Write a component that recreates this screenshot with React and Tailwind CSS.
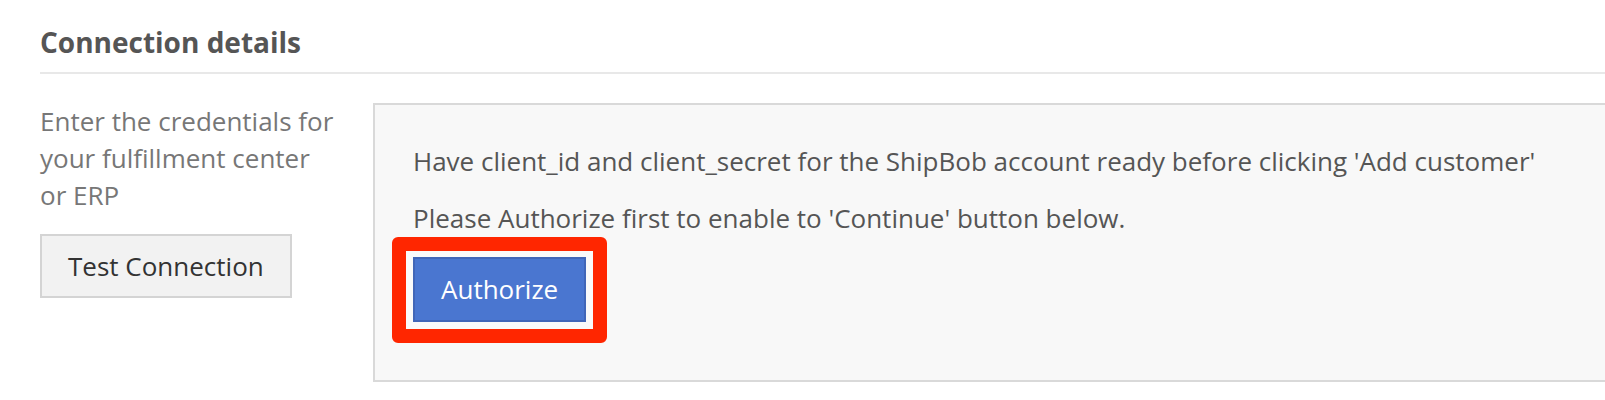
export default function App() {
  return (
    <div
      className="w-[1605px] h-[400px] overflow-hidden bg-white pl-[40px]"
      style={{ fontFamily: '"Open Sans", "Noto Sans", sans-serif' }}
    >
      <h2 className="pt-[22px] text-[28px] leading-[40px] font-bold text-[#555555]">
        Connection details
      </h2>
      <div className="mt-[10px] h-[2px] bg-[#e8e8e8]" />
      <div className="mt-[29px] flex items-start">
        <div className="w-[333px] shrink-0">
          <p className="whitespace-nowrap text-[26px] leading-[37px] text-[#777777]">
            Enter the credentials for
            <br />
            your fulfillment center
            <br />
            or ERP
          </p>
          <button className="mt-[20px] border-2 border-[#d4d4d4] bg-[#f2f2f2] px-[26px] pt-[12px] pb-[11px] text-[26px] leading-[37px] text-[#333333]">
            Test Connection
          </button>
        </div>
        <div className="-mr-[40px] flex-1 border-2 border-[#d9d9d9] bg-[#f8f8f8] px-[38px] pt-[38px] pb-[37px]">
          <p className="whitespace-nowrap text-[26px] leading-[37px] text-[#555555]">
            Have client_id and client_secret for the ShipBob account ready before clicking 'Add customer'
          </p>
          <p className="mt-[20px] whitespace-nowrap text-[26px] leading-[37px] text-[#555555]">
            Please Authorize first to enable to 'Continue' button below.
          </p>
          <div className="-ml-[21px] inline-block rounded-[6px] border-[14px] border-[#ff2600] bg-[#fafafa] px-[7px] pt-[6px] pb-[7px]">
            <button className="block border-2 border-[#4166b8] bg-[#4a76d0] px-[26px] py-[12px] text-[26px] leading-[37px] text-white">
              Authorize
            </button>
          </div>
        </div>
      </div>
    </div>
  );
}
